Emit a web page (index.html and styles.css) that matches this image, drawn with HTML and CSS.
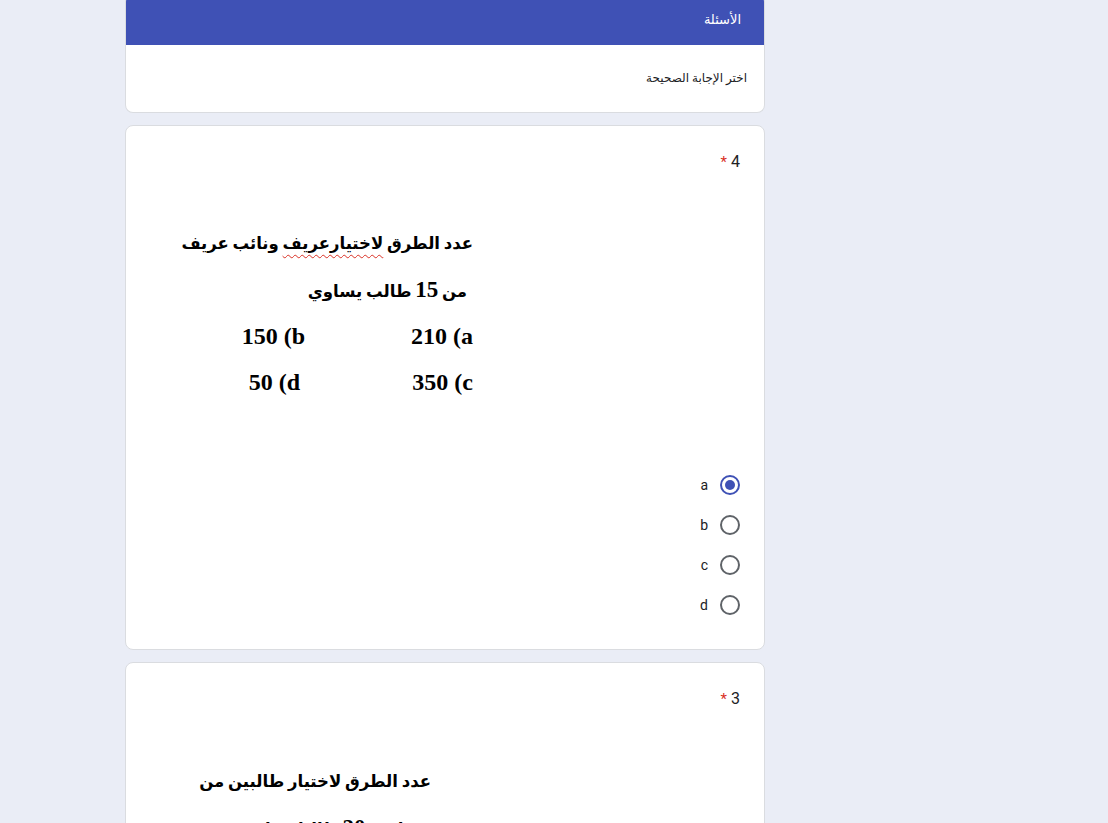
FILE: index.html
```html
<!DOCTYPE html>
<html lang="ar" dir="rtl">
<head>
<meta charset="utf-8">
<title>الأسئلة</title>
<link rel="stylesheet" href="styles.css">
</head>
<body>
<div class="page">
  <section class="card header-card">
    <div class="band">الأسئلة</div>
    <div class="desc">اختر الإجابة الصحيحة</div>
  </section>

  <section class="card question">
    <div class="q-title"><span class="num">4</span> <span class="req">*</span></div>
    <div class="q-image">
      <div class="line">عدد الطرق <span class="spell">لاختيارعريف</span> ونائب عريف</div>
      <div class="line indent">من <span class="n">15</span> طالب يساوي</div>
      <div class="choices">
        <span class="c"><bdi dir="ltr">210 (a</bdi></span>
        <span class="c"><bdi dir="ltr">150 (b</bdi></span>
        <span class="c"><bdi dir="ltr">350 (c</bdi></span>
        <span class="c shift"><bdi dir="ltr">50 (d</bdi></span>
      </div>
    </div>
    <div class="options">
      <label class="opt"><span class="radio checked"></span><span class="lbl">a</span></label>
      <label class="opt"><span class="radio"></span><span class="lbl">b</span></label>
      <label class="opt"><span class="radio"></span><span class="lbl">c</span></label>
      <label class="opt"><span class="radio"></span><span class="lbl">d</span></label>
    </div>
  </section>

  <section class="card question">
    <div class="q-title"><span class="num">3</span> <span class="req">*</span></div>
    <div class="q-image second">
      <div class="line">عدد الطرق لاختيار طالبين من</div>
      <div class="line">فصل به <span class="n">20</span> طالبا يساوي</div>
    </div>
  </section>
</div>
</body>
</html>
```

FILE: styles.css
```css
html, body {
  margin: 0;
  padding: 0;
  background: #eaedf6;
  height: 100%;
  overflow: hidden;
}

body {
  font-family: Roboto, "Liberation Sans", "DejaVu Sans", sans-serif;
  color: #202124;
}

.page {
  width: 640px;
  margin: -6px auto 0 125px;
  display: flex;
  flex-direction: column;
  gap: 12px;
}

.card {
  background: #fff;
  border: 1px solid #dadce0;
  border-radius: 8px;
  overflow: hidden;
  box-sizing: border-box;
}

.header-card {
  border-top: none;
}

.band {
  background: #3f51b5;
  color: #fff;
  height: 51px;
  display: flex;
  align-items: center;
  padding: 0 23px 0 24px;
  font-size: 13px;
  box-sizing: border-box;
}

.desc {
  padding: 24px 17px 25px 24px;
  font-size: 12px;
  line-height: 18px;
}

.question {
  padding: 24px 24px 24px 24px;
}

.q-title {
  font-size: 16px;
  line-height: 24px;
  color: #202124;
}

.req {
  color: #d93025;
  font-size: 15px;
}

.q-image {
  padding: 47px 267px 60px 0;
  font-family: "DejaVu Sans", sans-serif;
  font-weight: bold;
  font-size: 16.5px;
  word-spacing: -2px;
  color: #000;
}

.q-image .line {
  height: 46px;
  line-height: 46px;
  white-space: nowrap;
}

.q-image .indent {
  padding-right: 6px;
}

.q-image .n {
  font-family: "Liberation Serif", serif;
  font-size: 23px;
}

.spell {
  text-decoration: underline wavy #d93025;
  text-decoration-thickness: 1px;
  text-underline-offset: 5px;
}

.choices {
  display: grid;
  grid-template-columns: 168px 168px;
  width: 336px;
  font-family: "Liberation Serif", serif;
  font-size: 24px;
  word-spacing: 0;
}

.choices .c {
  height: 46px;
  line-height: 46px;
  text-align: right;
}

.choices .shift {
  padding-right: 5px;
}

.q-image.second {
  padding-top: 48px;
  padding-right: 309px;
}

.options {
  display: flex;
  flex-direction: column;
}

.opt {
  height: 40px;
  display: flex;
  align-items: center;
  gap: 12px;
  font-size: 14px;
}

.radio {
  width: 20px;
  height: 20px;
  border: 2px solid #5f6368;
  border-radius: 50%;
  box-sizing: border-box;
  display: flex;
  align-items: center;
  justify-content: center;
}

.radio.checked {
  border-color: #3f51b5;
}

.radio.checked::after {
  content: "";
  width: 10px;
  height: 10px;
  border-radius: 50%;
  background: #3f51b5;
}

.lbl {
  color: #202124;
}
```
